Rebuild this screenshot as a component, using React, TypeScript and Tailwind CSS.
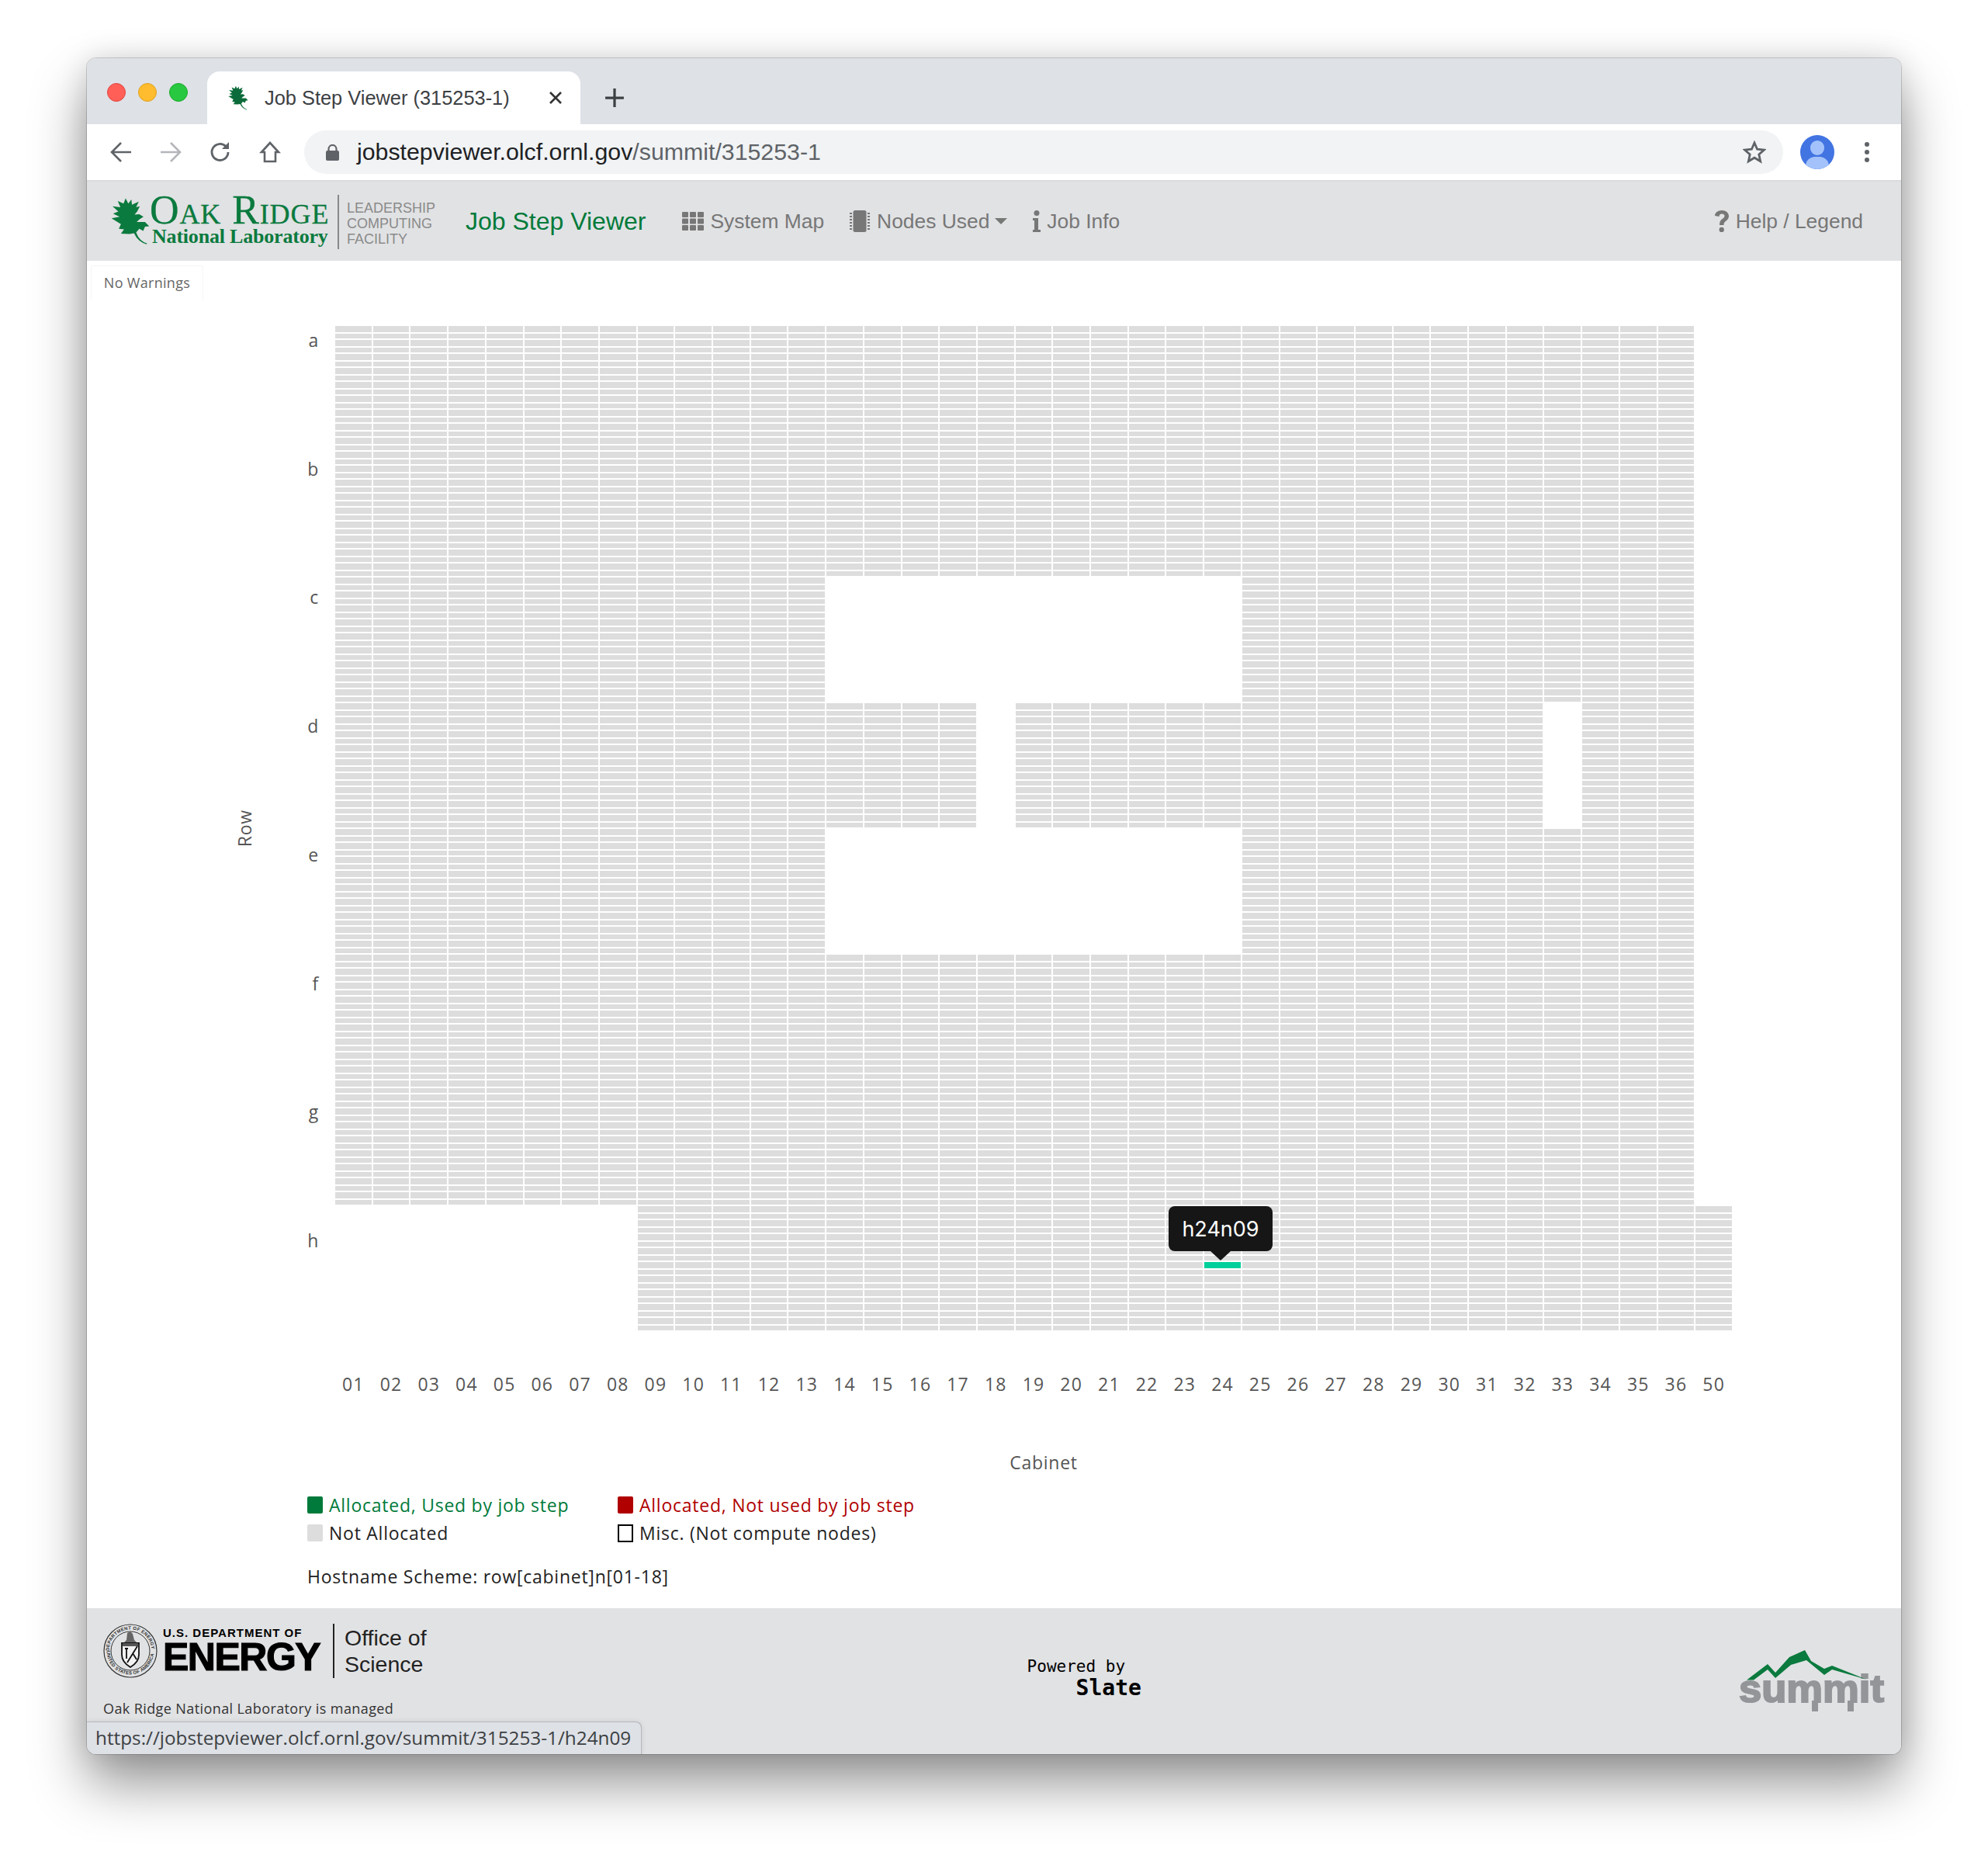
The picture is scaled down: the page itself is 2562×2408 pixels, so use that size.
import React from "react";

const TICKS = [
  "01","02","03","04","05","06","07","08","09","10","11","12","13","14","15","16","17","18",
  "19","20","21","22","23","24","25","26","27","28","29","30","31","32","33","34","35","36","50",
];
const ROWS = ["a", "b", "c", "d", "e", "f", "g", "h"];

function exists(col: number, row: number): boolean {
  if (col === 36) return row === 7;
  if (row === 7 && col < 8) return false;
  if ((row === 2 || row === 4) && col >= 13 && col <= 23) return false;
  if (row === 3 && (col === 17 || col === 32)) return false;
  return true;
}

function Cells() {
  const out: React.ReactNode[] = [];
  for (let n = 0; n < 144; n++) {
    for (let c = 0; c < 37; c++) {
      const row = Math.floor(n / 18);
      const on = exists(c, row);
      const active = c === 23 && n === 134;
      out.push(
        <div
          key={`${c}-${n}`}
          className={active ? "bg-[#00cf9b]" : on ? "bg-[#dddddd]" : "bg-transparent"}
        />
      );
    }
  }
  return <>{out}</>;
}

const OakLeaf = ({ className }: { className: string }) => (
  <svg viewBox="42 38 148 182" className={className} fill="currentColor">
    <path d="M98 42L108 62L120 46L122 66L148 54L138 76L152 72L142 92L132 104L150 102L166 112L150 122L140 132L172 132L188 148L172 150L165 166L150 158L138 172Q150 205 180 214L178 217Q145 208 130 175L112 178L80 176L92 160L72 158L80 140L44 118L75 112L50 100L70 92L48 72L78 76L68 52L90 62Z" />
  </svg>
);

const Chip = () => (
  <svg viewBox="0 0 26 28" className="w-[26px] h-[28px]" fill="#777">
    <rect x="4.5" y="0" width="17" height="28" rx="2.5" />
    {[3, 7, 11, 15, 19, 23].map((y) => (
      <g key={y}>
        <rect x="0" y={y} width="3" height="2" />
        <rect x="23" y={y} width="3" height="2" />
      </g>
    ))}
  </svg>
);

const GridIcon = () => (
  <svg viewBox="0 0 28 24" className="w-[28px] h-[24px]" fill="#777">
    {[0, 8.5, 17].map((y) =>
      [0, 10, 20].map((x) => <rect key={`${x}${y}`} x={x} y={y} width="8" height="7" rx="1" />)
    )}
  </svg>
);

const Seal = () => (
  <svg viewBox="0 0 70 70" className="w-[70px] h-[70px] shrink-0">
    <defs>
      <path id="sealTop" d="M7.500 35a27.500 27.500 0 0 1 55 0" />
      <path id="sealBottom" d="M4.500 35a30.500 30.500 0 0 0 61 0" />
    </defs>
    <circle cx="35" cy="35" r="34" fill="none" stroke="#333" strokeWidth="1.200" />
    <text fontSize="6" fontWeight="700" fill="#333" fontFamily="'Liberation Sans'">
      <textPath href="#sealTop" textLength="84">DEPARTMENT OF ENERGY</textPath>
    </text>
    <text fontSize="6" fontWeight="700" fill="#333" fontFamily="'Liberation Sans'">
      <textPath href="#sealBottom" textLength="92">UNITED STATES OF AMERICA</textPath>
    </text>
    <circle cx="35" cy="35" r="25" fill="none" stroke="#333" strokeWidth="1" />
    <path d="M31 12l4-2 3 3 2 8 3 3H27l3-3z" fill="#666" />
    <path d="M24 25h22v15c0 8-6 13-11 16-5-3-11-8-11-16z" fill="#f2f2f2" stroke="#111" strokeWidth="1.800" />
    <path d="M25 25h20v4H25z" fill="#555" />
    <path d="M44 29L31 50M30 32v13M38 38l5 8M28 32h4" stroke="#111" strokeWidth="1.800" fill="none" />
  </svg>
);

const SummitLogo = () => (
  <svg viewBox="0 0 210 100" className="w-[210px] h-[100px]">
    <text
      x="13"
      y="78"
      textLength="187"
      lengthAdjust="spacingAndGlyphs"
      fill="#939598"
      stroke="#939598"
      strokeWidth="2"
      fontFamily="'Liberation Sans'"
      fontWeight="700"
      fontSize="50"
    >
      summit
    </text>
    <rect x="107" y="76" width="8" height="14" fill="#939598" />
    <rect x="153" y="76" width="8" height="14" fill="#939598" />
    <path
      d="M23 49.500L50 29L60 40L78 20L98 11L106 25L123 35L133 31L178 49L133 36L123 43L100 24L80 30L60 47L50 36L32 49.500Z"
      fill="#0b7a3e"
    />
  </svg>
);

export default function App() {
  return (
    <div className="w-[2562px] h-[2408px] bg-white pt-[75px] pl-[112px] font-['Liberation_Sans',sans-serif]">
      <div className="relative w-[2338px] h-[2185px] flex flex-col rounded-[12px] overflow-hidden shadow-[0_38px_70px_rgba(0,0,0,0.42),0_0_36px_rgba(0,0,0,0.12),0_0_0_1px_rgba(0,0,0,0.16)]">
        {/* tab strip */}
        <div className="h-[85px] bg-[#dee1e6] flex items-end shrink-0">
          <div className="flex gap-[16px] pl-[26px] pr-[25px] self-start mt-[32px]">
            <div className="w-[24px] h-[24px] rounded-full bg-[#ff5f57] border border-[#e0443e]" />
            <div className="w-[24px] h-[24px] rounded-full bg-[#febc2e] border border-[#dea123]" />
            <div className="w-[24px] h-[24px] rounded-full bg-[#28c840] border border-[#1aab29]" />
          </div>
          <div className="w-[481px] h-[68px] bg-white rounded-t-[16px] flex items-center pl-[27px] shrink-0">
            <OakLeaf className="w-[26px] h-[32px] text-[#0b6b3a] shrink-0" />
            <span className="ml-[21px] text-[25.4px] text-[#3c4043] whitespace-nowrap w-[366px]">
              Job Step Viewer (315253-1)
            </span>
            <svg viewBox="0 0 18 18" className="w-[18px] h-[18px]" stroke="#333" strokeWidth="2.600" fill="none">
              <path d="M2 2l14 14M16 2L2 16" />
            </svg>
          </div>
          <svg viewBox="0 0 24 24" className="w-[26px] h-[26px] ml-[31px] mb-[21px]" stroke="#3c4043" strokeWidth="3" fill="none">
            <path d="M12 1v22M1 12h22" />
          </svg>
        </div>
        {/* toolbar */}
        <div className="h-[72px] bg-white flex items-center shrink-0">
          <div className="flex items-center pl-[30px] gap-[36px]">
            <svg viewBox="0 0 28 28" className="w-[28px] h-[28px]" stroke="#5f6368" strokeWidth="2.600" fill="none">
              <path d="M27 14H2M14 2L2 14l12 12" />
            </svg>
            <svg viewBox="0 0 28 28" className="w-[28px] h-[28px]" stroke="#b4b6ba" strokeWidth="2.600" fill="none">
              <path d="M1 14h25M14 2l12 12-12 12" />
            </svg>
            <svg viewBox="0 0 28 28" className="w-[28px] h-[28px]" stroke="#5f6368" strokeWidth="2.800" fill="none">
              <path d="M24 14a10.500 10.500 0 1 1-3-7.400" />
              <path d="M25 1v9h-9" fill="#5f6368" stroke="none" />
            </svg>
            <svg viewBox="0 0 28 28" className="w-[28px] h-[28px]" stroke="#5f6368" strokeWidth="2.600" fill="none">
              <path d="M14 2L3 14h4v12h14V14h4z" />
            </svg>
          </div>
          <div className="ml-[30px] w-[1906px] h-[56px] rounded-full bg-[#f1f3f4] flex items-center pl-[28px]">
            <svg viewBox="0 0 17 21" className="w-[17px] h-[21px] shrink-0" fill="#5f6368">
              <rect x="0" y="8" width="17" height="13" rx="2" />
              <path d="M3.500 9V6a5 5 0 0 1 10 0v3" fill="none" stroke="#5f6368" strokeWidth="2.200" />
            </svg>
            <span className="ml-[23px] text-[30.300px] whitespace-nowrap text-[#202124]">
              jobstepviewer.olcf.ornl.gov<span className="text-[#5f6368]">/summit/315253-1</span>
            </span>
            <div className="flex-1" />
            <svg viewBox="0 0 30 30" className="w-[30px] h-[30px] mr-[22px]" stroke="#5f6368" strokeWidth="2.800" fill="none">
              <path d="M15 3l3.600 8.200 8.900.9-6.700 5.900 1.900 8.800-7.700-4.600-7.700 4.600 1.900-8.800-6.700-5.900 8.900-.9z" />
            </svg>
          </div>
          <div className="ml-[22px] w-[44px] h-[44px] rounded-full bg-[#4274e2] overflow-hidden relative shrink-0">
            <div className="absolute left-[13px] top-[7px] w-[18px] h-[19px] rounded-full bg-[#a3c2fb]" />
            <div className="absolute left-[7px] top-[28px] w-[30px] h-[24px] rounded-full bg-[#a3c2fb]" />
          </div>
          <div className="ml-[39px] flex flex-col gap-[4px]">
            <div className="w-[6px] h-[6px] rounded-full bg-[#5f6368]" />
            <div className="w-[6px] h-[6px] rounded-full bg-[#5f6368]" />
            <div className="w-[6px] h-[6px] rounded-full bg-[#5f6368]" />
          </div>
        </div>
        {/* nav */}
        <div className="h-[104px] bg-[#e1e2e4] border-t-2 border-[#d9dbde] pt-[1px] flex items-center text-[#777777] text-[26.400px] shrink-0">
          <OakLeaf className="ml-[31px] w-[50px] h-[62px] shrink-0 text-[#0b7a3e] mt-[-2px]" />
          <div className="flex flex-col w-[232px] ml-[1px] mt-[-3px] font-['Liberation_Serif',serif] text-[#0b7a3e] whitespace-nowrap">
            <span className="text-[52px] leading-[42px] [font-variant:small-caps] tracking-[0.9px] -ml-[1px] [-webkit-text-stroke:0.3px_#0b7a3e]">Oak Ridge</span>
            <span className="text-[26px] leading-[26px] ml-[2px] font-bold tracking-[-0.2px]">National Laboratory</span>
          </div>
          <div className="w-[2px] h-[70px] bg-[#888] ml-[9px]" />
          <div className="ml-[10px] mt-[4px] text-[18px] leading-[20px] text-[#8a8a8a] w-[120px]">
            LEADERSHIP<br />COMPUTING<br />FACILITY
          </div>
          <span className="ml-[33px] mb-[2px] text-[32px] whitespace-nowrap text-[#007a3a]">Job Step Viewer</span>
          <div className="ml-[47px] flex items-center gap-[8px]">
            <GridIcon />
            <span>System Map</span>
          </div>
          <div className="ml-[33px] flex items-center gap-[9px]">
            <Chip />
            <span>Nodes Used</span>
            <div className="w-0 h-0 border-x-[8px] border-x-transparent border-t-[8px] border-t-[#777] -ml-[2px]" />
          </div>
          <div className="ml-[33px] flex items-center gap-[8px]">
            <svg viewBox="0 0 10 28" className="w-[10px] h-[28px]" fill="#777">
              <circle cx="5" cy="3.500" r="3.500" />
              <path d="M0 10h7v15h3v3H0v-3h2V13H0z" />
            </svg>
            <span>Job Info</span>
          </div>
          <div className="flex-1" />
          <div className="mr-[49px] flex items-center gap-[9px]">
            <svg viewBox="0 0 19 28" className="w-[19px] h-[28px]" fill="#777">
              <path d="M1 7C1 3 5 0 10 0c5 0 9 3 9 7.500 0 3-2 5-4 6.500-2 1.500-2.500 2.500-2.500 5H7c0-4 1-6 3-7.500 2-1.500 3.500-2.500 3.500-4.500 0-1.500-1.500-2.500-3.500-2.500S6.500 5.500 6.500 8z" />
              <circle cx="9.700" cy="25" r="3.200" />
            </svg>
            <span>Help / Legend</span>
          </div>
        </div>
        {/* content */}
        <div className="flex-1 bg-white text-[23px] tracking-[0.75px] font-['Open_Sans',sans-serif]">
          <div className="ml-[5px] mt-[6px] w-[145px] h-[44px] border border-b-0 border-[#f5f5f5] rounded-t-[3px] flex items-center justify-center text-[18px] tracking-[0.3px] text-[#666]">
            No Warnings
          </div>
          <div className="mt-[34px] flex items-center">
            <div className="ml-[180px] w-[46px] flex justify-center items-center text-[#555]">
              <span className="-rotate-90 whitespace-nowrap">Row</span>
            </div>
            <div className="w-[73px] h-[1196px] self-start flex flex-col justify-between items-end text-[#555] leading-[36px]">
              {ROWS.map((r) => (
                <div key={r} className="h-[36px]">{r}</div>
              ))}
            </div>
            <div className="relative ml-[21px] w-[1800px] grid grid-cols-[repeat(37,1fr)] grid-rows-[repeat(72,8px_6px)] gap-x-[2px] gap-y-[2px]">
              <Cells />
              <div className="absolute left-[1074px] top-[1134px] flex flex-col items-center">
                <div className="w-[134px] h-[58px] pt-[2px] rounded-[8px] bg-[#161616] text-white text-[27px] tracking-normal flex items-center justify-center font-['Inter',sans-serif]">
                  h24n09
                </div>
                <div className="w-0 h-0 border-x-[13px] border-x-transparent border-t-[12px] border-t-[#161616]" />
              </div>
            </div>
          </div>
          <div className="ml-[320px] mt-[51px] w-[1800px] grid grid-cols-[repeat(37,1fr)] gap-x-[2px] text-[#555] leading-[36px] text-center tracking-[1.2px]">
            {TICKS.map((t) => (
              <div key={t} className="h-[36px]">{t}</div>
            ))}
          </div>
          <div className="ml-[320px] pl-[26px] mt-[65px] w-[1800px] h-[36px] leading-[36px] text-center text-[#555]">Cabinet</div>
          <div className="ml-[284px] mt-[19px] grid grid-cols-[400px_400px] auto-rows-[36px] leading-[36px] text-[#222]">
            <div className="flex items-center gap-[8px] text-[#007a3a]">
              <div className="w-[20px] h-[22px] rounded-[2px] bg-[#007a3a]" />
              <span>Allocated, Used by job step</span>
            </div>
            <div className="flex items-center gap-[8px] text-[#b00000]">
              <div className="w-[20px] h-[22px] rounded-[2px] bg-[#b00000]" />
              <span>Allocated, Not used by job step</span>
            </div>
            <div className="flex items-center gap-[8px]">
              <div className="w-[20px] h-[22px] rounded-[2px] bg-[#dddddd]" />
              <span>Not Allocated</span>
            </div>
            <div className="flex items-center gap-[8px]">
              <div className="w-[20px] h-[23px] bg-white border-2 border-black" />
              <span>Misc. (Not compute nodes)</span>
            </div>
          </div>
          <div className="ml-[284px] mt-[20px] h-[36px] leading-[36px] text-[#222]">Hostname Scheme: row[cabinet]n[01-18]</div>
        </div>
        {/* footer */}
        <div className="relative h-[188px] bg-[#e1e2e4] shrink-0 pl-[21px] pt-[20px] flex items-start">
          <div className="flex flex-col">
            <div className="flex items-center">
              <Seal />
              <div className="ml-[7px] w-[206px] flex flex-col whitespace-nowrap text-black">
                <span className="text-[15px] leading-[18px] font-bold tracking-[1px] mt-[-2px]">U.S. DEPARTMENT OF</span>
                <span className="text-[50px] leading-[44px] font-bold [-webkit-text-stroke:1.200px_#000] tracking-[-1.500px]">ENERGY</span>
              </div>
              <div className="ml-[13px] w-[2px] h-[70px] bg-[#222]" />
              <div className="ml-[13px] text-[28.500px] leading-[34px] text-[#222] whitespace-nowrap">Office of<br />Science</div>
            </div>
            <div className="mt-[26px] text-[18px] leading-[26px] tracking-[0.4px] font-['Open_Sans',sans-serif] text-[#333] whitespace-nowrap">
              Oak Ridge National Laboratory is managed
            </div>
          </div>
          <div className="ml-[774px] mt-[42px] font-['DejaVu_Sans_Mono',monospace] text-black whitespace-nowrap">
            <div className="text-[21px] leading-[26px]">Powered by</div>
            <div className="text-[28px] leading-[30px] font-bold ml-[63px]">Slate</div>
          </div>
          <div className="flex-1" />
          <div className="mt-[23px] mr-[12px]">
            <SummitLogo />
          </div>
          <div className="absolute left-0 bottom-0 w-[715px] h-[42px] bg-[#dee1e6] rounded-tr-[8px] border-t border-r border-[#b5b7ba] text-[24.300px] leading-[40px] pl-[11px] text-[#3c4043] whitespace-nowrap font-['Open_Sans',sans-serif] shadow-[0_0_6px_rgba(0,0,0,0.1)]">
            https://jobstepviewer.olcf.ornl.gov/summit/315253-1/h24n09
          </div>
        </div>
      </div>
    </div>
  );
}
